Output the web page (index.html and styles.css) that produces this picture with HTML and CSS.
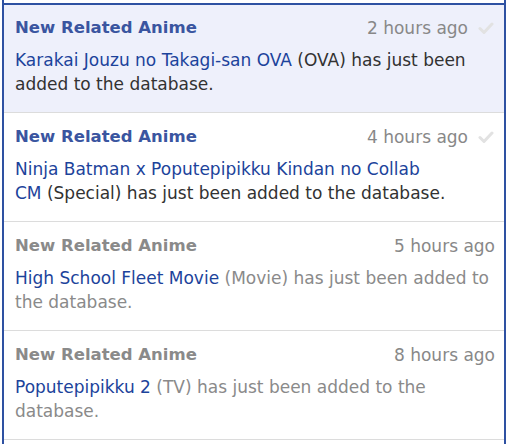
FILE: index.html
```html
<!DOCTYPE html>
<html>
<head>
<meta charset="utf-8">
<link rel="stylesheet" href="styles.css">
</head>
<body>
<div class="panel">
  <div class="item unread highlight">
    <div class="head">
      <span class="title">New Related Anime</span>
      <span class="meta"><span class="time">2 hours ago</span><svg class="check" viewBox="0 0 16 16" width="16" height="16"><path d="M2 8.5 L6 12.5 L14 4" fill="none" stroke="currentColor" stroke-width="3" stroke-linecap="round" stroke-linejoin="round"/></svg></span>
    </div>
    <div class="body"><a href="#">Karakai Jouzu no Takagi-san OVA</a> (OVA) has just been<br>added to the database.</div>
  </div>
  <div class="item unread">
    <div class="head">
      <span class="title">New Related Anime</span>
      <span class="meta"><span class="time">4 hours ago</span><svg class="check" viewBox="0 0 16 16" width="16" height="16"><path d="M2 8.5 L6 12.5 L14 4" fill="none" stroke="currentColor" stroke-width="3" stroke-linecap="round" stroke-linejoin="round"/></svg></span>
    </div>
    <div class="body"><a href="#">Ninja Batman x Poputepipikku Kindan no Collab<br>CM</a> (Special) has just been added to the database.</div>
  </div>
  <div class="item read">
    <div class="head">
      <span class="title">New Related Anime</span>
      <span class="meta"><span class="time">5 hours ago</span></span>
    </div>
    <div class="body"><a href="#">High School Fleet Movie</a> (Movie) has just been added to<br>the database.</div>
  </div>
  <div class="item read">
    <div class="head">
      <span class="title">New Related Anime</span>
      <span class="meta"><span class="time">8 hours ago</span></span>
    </div>
    <div class="body"><a href="#">Poputepipikku 2</a> (TV) has just been added to the<br>database.</div>
  </div>
</div>
</body>
</html>
```
FILE: styles.css
```css
html, body {
  margin: 0;
  padding: 0;
  background: #ffffff;
}
body {
  font-family: "DejaVu Sans", Verdana, sans-serif;
  font-size: 17px;
  color: #323232;
}
.panel {
  margin: 0 6px 0 2px;
  padding-top: 3px;
  border-left: 2px solid #2e51a2;
  border-right: 2px solid #2e51a2;
  height: 444px;
  box-sizing: border-box;
  overflow: hidden;
}
.item {
  border-bottom: 1px solid #dcdcdc;
  padding: 12px 9px 0 11px;
  height: 109px;
  box-sizing: border-box;
}
.item:first-child {
  border-top: 2px solid #2e51a2;
  height: 110px;
  padding-top: 11px;
}
.highlight {
  background: #eef0fb;
}
.head {
  display: flex;
  justify-content: space-between;
  align-items: center;
  line-height: 24px;
  height: 24px;
}
.title {
  font-weight: bold;
  font-size: 16.5px;
  color: #3a55a0;
}
.meta {
  display: flex;
  align-items: center;
  color: #888888;
}
.check {
  color: #e2e2e2;
  margin-left: 10px;
  margin-right: 1px;
}
.body {
  margin-top: 8px;
  line-height: 24px;
  white-space: nowrap;
}
.body a {
  color: #1c439b;
  text-decoration: none;
}
.read .title,
.read .body {
  color: #8a8a8a;
}
.read .body a {
  color: #1c439b;
}
```
